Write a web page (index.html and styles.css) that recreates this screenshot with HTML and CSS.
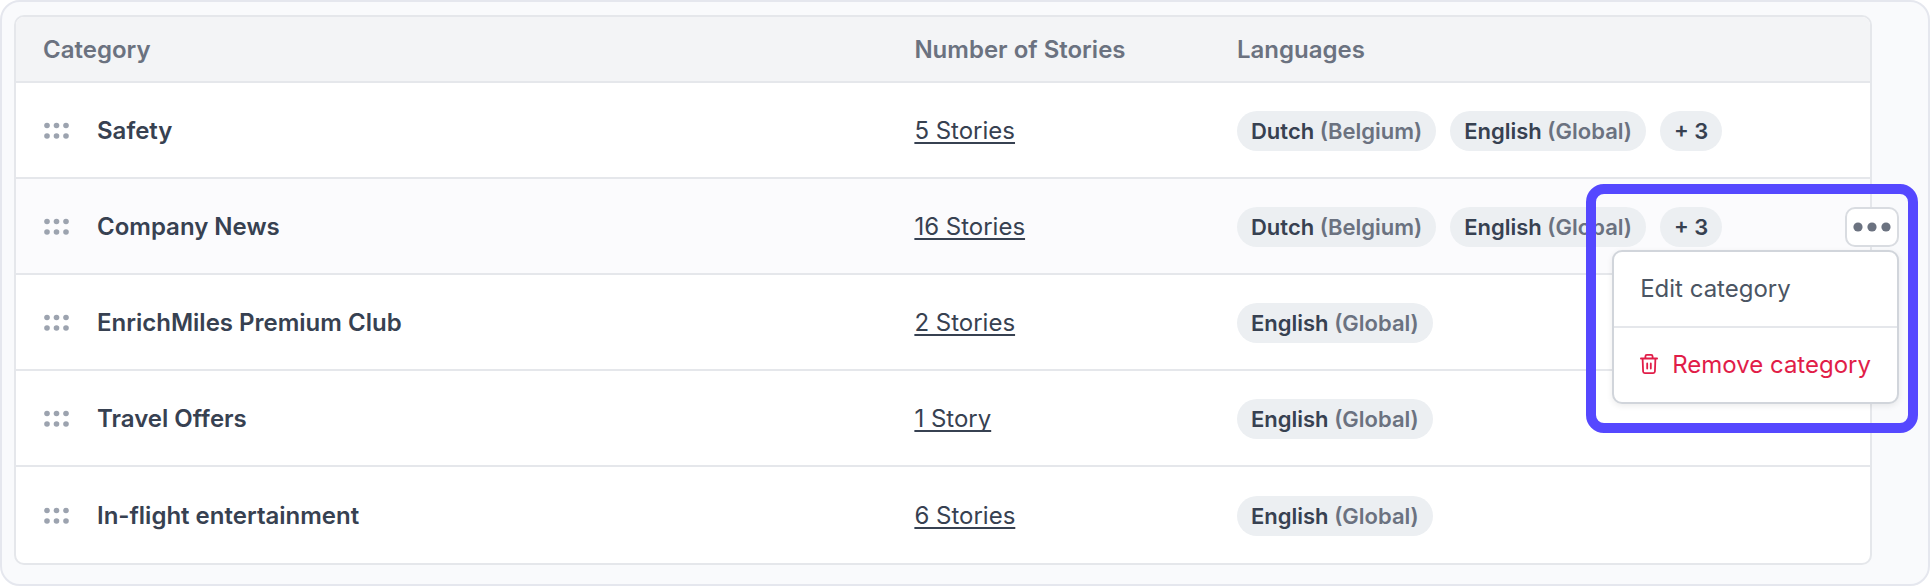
FILE: index.html
```html
<!DOCTYPE html>
<html lang="en">
<head>
    <meta charset="UTF-8">
    <meta name="viewport" content="width=device-width, initial-scale=1.0">
    <title>Categories</title>
    <link rel="stylesheet" href="styles.css">
</head>
<body>
    <!-- Shared icons -->
    <svg class="icon-defs" aria-hidden="true">
        <symbol id="icon-drag" viewBox="0 0 26 18">
            <circle cx="4" cy="3.5" r="2.8"/>
            <circle cx="13.5" cy="3.5" r="2.8"/>
            <circle cx="23" cy="3.5" r="2.8"/>
            <circle cx="4" cy="14" r="2.8"/>
            <circle cx="13.5" cy="14" r="2.8"/>
            <circle cx="23" cy="14" r="2.8"/>
        </symbol>
    </svg>

    <main class="panel">
        <table class="categories">
            <thead>
                <tr>
                    <th class="col-category">Category</th>
                    <th class="col-stories">Number of Stories</th>
                    <th class="col-languages">Languages</th>
                </tr>
            </thead>
            <tbody>
                <tr>
                    <td>
                        <div class="category">
                            <svg class="drag"><use href="#icon-drag"/></svg>
                            <span>Safety</span>
                        </div>
                    </td>
                    <td><a class="stories" href="#">5 Stories</a></td>
                    <td>
                        <div class="languages">
                            <span class="pill">Dutch <span class="region">(Belgium)</span></span>
                            <span class="pill">English <span class="region">(Global)</span></span>
                            <span class="pill">+ 3</span>
                        </div>
                    </td>
                </tr>
                <tr class="active">
                    <td>
                        <div class="category">
                            <svg class="drag"><use href="#icon-drag"/></svg>
                            <span>Company News</span>
                        </div>
                    </td>
                    <td><a class="stories" href="#">16 Stories</a></td>
                    <td>
                        <div class="languages">
                            <span class="pill">Dutch <span class="region">(Belgium)</span></span>
                            <span class="pill">English <span class="region">(Global)</span></span>
                            <span class="pill">+ 3</span>
                        </div>
                        <div class="highlight">
                            <button class="more" type="button" aria-label="More actions">
                                <svg class="dots" viewBox="0 0 38 10">
                                    <circle cx="5" cy="5" r="4.6"/>
                                    <circle cx="19" cy="5" r="4.6"/>
                                    <circle cx="33" cy="5" r="4.6"/>
                                </svg>
                            </button>
                            <div class="menu">
                                <button class="menu-item" type="button">Edit category</button>
                                <button class="menu-item danger" type="button">
                                    <svg class="trash" viewBox="0 0 18 22">
                                        <path d="M.9 4.5h16.2M2.6 4.5l.5 13a1.7 1.7 0 0 0 1.7 1.6h8.4a1.7 1.7 0 0 0 1.7-1.6l.5-13M5.4 4.5V2.4A1.5 1.5 0 0 1 6.9.9h4.2a1.5 1.5 0 0 1 1.5 1.5v2.1M7.2 9.5v5M10.8 9.5v5"/>
                                    </svg>
                                    Remove category
                                </button>
                            </div>
                        </div>
                    </td>
                </tr>
                <tr>
                    <td>
                        <div class="category">
                            <svg class="drag"><use href="#icon-drag"/></svg>
                            <span>EnrichMiles Premium Club</span>
                        </div>
                    </td>
                    <td><a class="stories" href="#">2 Stories</a></td>
                    <td>
                        <div class="languages">
                            <span class="pill">English <span class="region">(Global)</span></span>
                        </div>
                    </td>
                </tr>
                <tr>
                    <td>
                        <div class="category">
                            <svg class="drag"><use href="#icon-drag"/></svg>
                            <span>Travel Offers</span>
                        </div>
                    </td>
                    <td><a class="stories" href="#">1 Story</a></td>
                    <td>
                        <div class="languages">
                            <span class="pill">English <span class="region">(Global)</span></span>
                        </div>
                    </td>
                </tr>
                <tr>
                    <td>
                        <div class="category">
                            <svg class="drag"><use href="#icon-drag"/></svg>
                            <span>In-flight entertainment</span>
                        </div>
                    </td>
                    <td><a class="stories" href="#">6 Stories</a></td>
                    <td>
                        <div class="languages">
                            <span class="pill">English <span class="region">(Global)</span></span>
                        </div>
                    </td>
                </tr>
            </tbody>
        </table>
    </main>
</body>
</html>
```
FILE: styles.css
```css
:root {
    --text: #374151;
    --muted: #6b7280;
    --border: #e5e7eb;
    --danger: #e11d48;
    --accent: #5548ff;
}

* {
    box-sizing: border-box;
}

body {
    margin: 0;
    background: white;
    font-family: Inter, "Liberation Sans", sans-serif;
    font-size: 24px;
    line-height: 32px;
    color: var(--text);
}

button {
    font: inherit;
    cursor: pointer;
}

.icon-defs {
    display: none;
}

.panel {
    padding: 13px 56px 19px 12px;
    background: #f9fafc;
    border: 2px solid #e5e7ee;
    border-radius: 20px;
}

.categories {
    width: 100%;
    table-layout: fixed;
    border-collapse: separate;
    border-spacing: 0;
    background: white;
    border: 2px solid var(--border);
    border-radius: 10px;
}

.col-category {
    width: 47%;
}

.col-stories {
    width: 17.4%;
}

th, td {
    padding: 2px 27px 0;
    text-align: left;
    vertical-align: middle;
}

th {
    height: 66px;
    background: #f3f4f6;
    color: var(--muted);
    font-weight: 600;
    border-bottom: 2px solid var(--border);
}

th:first-child {
    border-top-left-radius: 8px;
}

th:last-child {
    border-top-right-radius: 8px;
}

td {
    position: relative;
    height: 96px;
    border-bottom: 2px solid var(--border);
}

tr:last-child td {
    border-bottom: none;
}

.active td {
    background: #fbfbfd;
}

.category {
    display: flex;
    align-items: center;
    gap: 28px;
    font-weight: 600;
}

.drag {
    width: 26px;
    height: 18px;
    fill: #9ca3af;
}

.stories {
    color: var(--text);
    text-underline-offset: 3px;
    text-decoration-thickness: 2px;
    text-decoration-skip-ink: none;
}

.languages {
    display: flex;
    gap: 14px;
}

.pill {
    padding: 4px 14px;
    background: #eceff2;
    border-radius: 20px;
    font-size: 22px;
    font-weight: 600;
    white-space: nowrap;
}

.region {
    color: var(--muted);
}

/* Frame around the open row menu, hangs over the table edge */
.highlight {
    position: absolute;
    top: 5px;
    right: -48px;
    z-index: 1;
    display: flex;
    flex-direction: column;
    align-items: flex-end;
    gap: 3px;
    padding: 13px 9px 19px 16px;
    border: 10px solid var(--accent);
    border-radius: 18px;
}

.more {
    display: flex;
    align-items: center;
    justify-content: center;
    width: 54px;
    height: 40px;
    padding: 0;
    background: white;
    border: 2px solid #d9dce1;
    border-radius: 10px;
}

.dots {
    width: 38px;
    height: 10px;
    fill: var(--muted);
}

.menu {
    background: white;
    border: 2px solid #d1d5db;
    border-radius: 10px;
    box-shadow: 0 2px 6px rgba(0, 0, 0, 0.08);
}

.menu-item {
    display: flex;
    align-items: center;
    gap: 14px;
    width: 100%;
    height: 74px;
    padding: 0 26px;
    background: none;
    border: none;
    color: #4b5563;
    white-space: nowrap;
}

.menu-item + .menu-item {
    height: 76px;
    border-top: 2px solid var(--border);
}

.menu-item.danger {
    color: var(--danger);
}

.trash {
    width: 18px;
    height: 22px;
    fill: none;
    stroke: currentColor;
    stroke-width: 1.8;
    stroke-linecap: round;
    stroke-linejoin: round;
}
```
